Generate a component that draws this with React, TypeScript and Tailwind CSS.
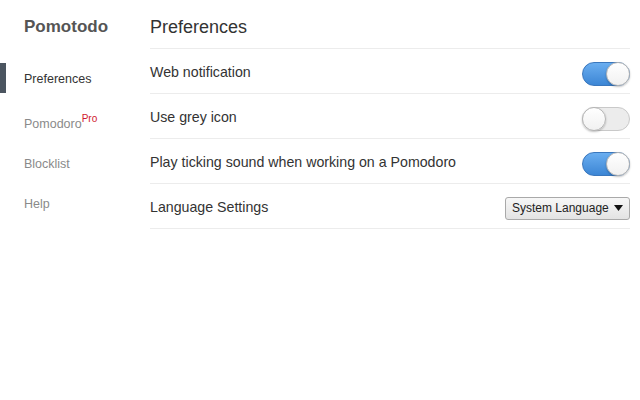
import { useState } from 'react'

// ─── Sidebar ──────────────────────────────────────────────────────────────────

function Sidebar() {
  return (
    <div className="w-[150px] shrink-0 pt-[17px]">
      <div className="pl-[24px] text-[17px] font-bold leading-5 text-[#555]">Pomotodo</div>

      <div className="relative mt-[26px] flex h-[30px] items-center pl-[24px] pt-[2px] text-[12.5px] text-[#333]">
        <span className="absolute left-0 top-0 h-[30px] w-[6px] bg-[#4b5560]" />
        Preferences
      </div>

      <div className="mt-[15px] flex h-[30px] items-center pl-[24px] pt-[2px] text-[12.5px] text-[#8a8a8a]">
        <span>
          Pomodoro
          <span className="relative -top-[6px] text-[10px] text-[#d0192e]">Pro</span>
        </span>
      </div>

      <div className="mt-[10px] flex h-[30px] items-center pl-[24px] pt-[2px] text-[12.5px] text-[#8a8a8a]">Blocklist</div>
      <div className="mt-[10px] flex h-[30px] items-center pl-[24px] pt-[2px] text-[12.5px] text-[#8a8a8a]">Help</div>
    </div>
  )
}

// ─── Controls ─────────────────────────────────────────────────────────────────

function Toggle({ initial }: { initial: boolean }) {
  const [on, setOn] = useState(initial)
  return (
    <button
      onClick={() => setOn(v => !v)}
      className={`mt-[6px] flex h-[24px] w-[48px] items-center rounded-full border p-0 ${
        on
          ? 'justify-end border-[#3a77bd] bg-gradient-to-b from-[#6aaef0] to-[#3c86d5]'
          : 'justify-start border-[#c9c9c9] bg-[#ececec]'
      }`}
    >
      <span className="-m-[1px] h-[24px] w-[24px] rounded-full border border-[#b5b5b5] bg-gradient-to-b from-white to-[#f1f1f1] shadow-[0_1px_2px_rgba(0,0,0,0.25)]" />
    </button>
  )
}

function LanguageSelect() {
  return (
    <div className="mt-[4px] flex h-[23px] w-[125px] items-center justify-between rounded-[3px] border border-[#a9a9a9] bg-gradient-to-b from-[#f7f7f7] to-[#e3e3e3] pl-[6px] pr-[6px] text-[12px] text-[#222]">
      <span>System Language</span>
      <svg width="9" height="6" viewBox="0 0 9 6">
        <path d="M0 0 H9 L4.5 6 Z" fill="#111" />
      </svg>
    </div>
  )
}

// ─── Rows ─────────────────────────────────────────────────────────────────────

function Row({ label, children }: { label: string; children: React.ReactNode }) {
  return (
    <div className="flex h-[45px] items-center justify-between border-b border-[#ececec] text-[14.2px] text-[#333]">
      <span className="mt-[3px]">{label}</span>
      {children}
    </div>
  )
}

export default function App() {
  return (
    <div
      className="flex h-[400px] w-[640px] bg-white"
      style={{ fontFamily: '"Liberation Sans", Arial, sans-serif' }}
    >
      <Sidebar />
      <div className="flex-1 pr-[10px]">
        <div className="h-[49px] border-b border-[#ececec] pt-[15px] text-[18px] leading-6 text-[#333]">
          Preferences
        </div>
        <Row label="Web notification">
          <Toggle initial={true} />
        </Row>
        <Row label="Use grey icon">
          <Toggle initial={false} />
        </Row>
        <Row label="Play ticking sound when working on a Pomodoro">
          <Toggle initial={true} />
        </Row>
        <Row label="Language Settings">
          <LanguageSelect />
        </Row>
      </div>
    </div>
  )
}
